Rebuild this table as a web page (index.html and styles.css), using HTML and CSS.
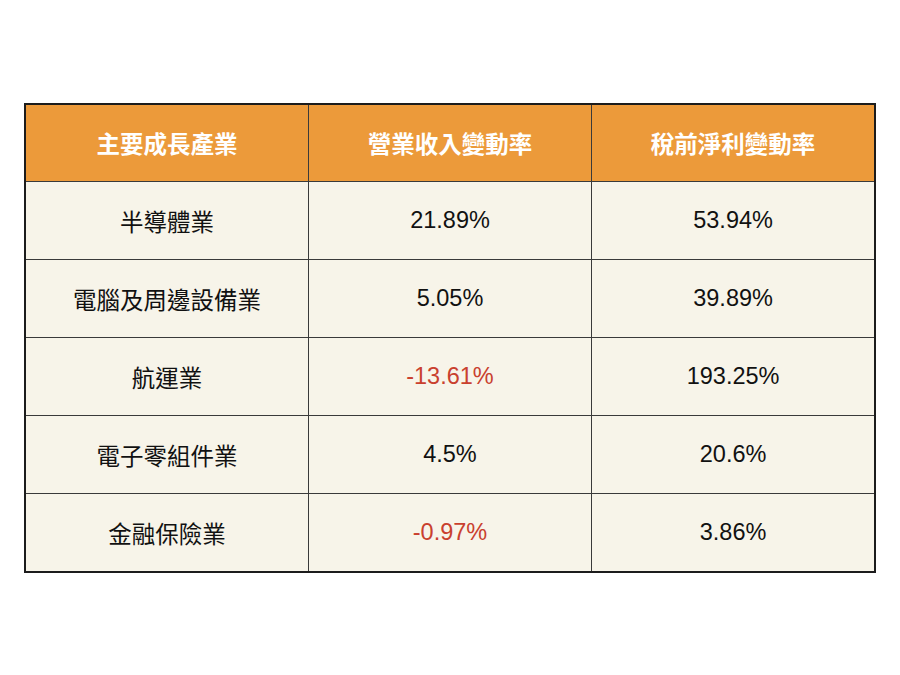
FILE: index.html
```html
<!DOCTYPE html>
<html lang="zh-TW">
<head>
    <meta charset="UTF-8">
    <meta name="viewport" content="width=device-width, initial-scale=1.0">
    <title>主要成長產業</title>
    <link rel="stylesheet" href="styles.css">
</head>
<body>
    <main class="page">
        <table class="growth-table">
            <thead>
                <tr>
                    <th>主要成長產業</th>
                    <th>營業收入變動率</th>
                    <th>稅前淨利變動率</th>
                </tr>
            </thead>
            <tbody>
                <tr>
                    <td>半導體業</td>
                    <td>21.89%</td>
                    <td>53.94%</td>
                </tr>
                <tr>
                    <td>電腦及周邊設備業</td>
                    <td>5.05%</td>
                    <td>39.89%</td>
                </tr>
                <tr>
                    <td>航運業</td>
                    <td class="neg">-13.61%</td>
                    <td>193.25%</td>
                </tr>
                <tr>
                    <td>電子零組件業</td>
                    <td>4.5%</td>
                    <td>20.6%</td>
                </tr>
                <tr>
                    <td>金融保險業</td>
                    <td class="neg">-0.97%</td>
                    <td>3.86%</td>
                </tr>
            </tbody>
        </table>
    </main>
</body>
</html>
```

FILE: styles.css
```css
body, html {
    margin: 0;
    padding: 0;
    background-color: #fff;
    font-family: "Liberation Sans", "Noto Sans CJK TC", sans-serif;
    color: #111;
}

.page {
    padding: 103px 24px 0 24px;
}

.growth-table {
    width: 852px;
    border-collapse: collapse;
    border: 2px solid #1c1c1c;
    table-layout: fixed;
}

.growth-table th,
.growth-table td {
    padding: 0;
    text-align: center;
    border: 1px solid #3a3a3a;
    font-size: 23.5px;
}

.growth-table th {
    height: 76px;
    background-color: #ec9a3a;
    color: #fff;
    font-weight: bold;
}

.growth-table td {
    height: 77px;
    background-color: #f7f4e9;
}

.growth-table td.neg {
    color: #c9402e;
}
```
